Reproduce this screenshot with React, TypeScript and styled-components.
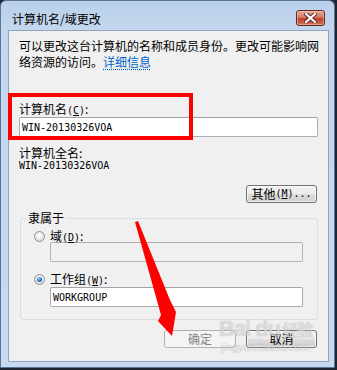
import React from 'react';
import styled, { createGlobalStyle } from 'styled-components';

const GlobalStyle = createGlobalStyle`
  html, body {
    margin: 0;
    padding: 0;
    background: #1d2530;
  }
  body {
    font-family: "Noto Sans CJK SC", "Noto Sans", sans-serif;
    font-size: 12px;
    color: #000;
  }
`;

const Window = styled.div`
  position: relative;
  width: 335px;
  height: 368px;
  box-sizing: border-box;
  border: 1px solid #5b7594;
  border-radius: 6px 6px 0 0;
  background: linear-gradient(#bad0ea, #c4d7ee 30px, #c6d9ef);
  padding: 0 5px 5px 7px;
  display: flex;
  flex-direction: column;
  overflow: hidden;
`;

const TitleBar = styled.div`
  height: 29px;
  display: flex;
  align-items: flex-start;
  justify-content: space-between;
`;

const Title = styled.div`
  margin: 10px 0 0 4px;
  line-height: 16px;
  color: #000;
`;

const CloseButton = styled.div`
  margin: 9px 4px 0 0;
  width: 29px;
  height: 16px;
  box-sizing: border-box;
  border: 1px solid #5e2a22;
  border-radius: 3px;
  background: linear-gradient(#e7a896, #d27764 45%, #bf3f2a 55%, #d0735d);
  box-shadow: inset 0 0 0 1px rgba(255, 220, 210, 0.45);
  display: flex;
  align-items: center;
  justify-content: center;
`;

const Client = styled.div`
  flex: 1;
  background: #f0f0f0;
  border: 1px solid #8ea4bf;
  padding: 7px 10px 0 10px;
  display: flex;
  flex-direction: column;
`;

const Intro = styled.div`
  line-height: 16px;
  margin-right: -4px;
`;

const Link = styled.span`
  color: #0066cc;
  text-decoration: underline dotted #0066cc;
  text-underline-offset: 2px;
`;

const Label = styled.div<{ $top: number }>`
  height: 16px;
  line-height: 16px;
  margin-top: ${(p) => p.$top}px;
`;

const Key = styled.span`
  font-family: "DejaVu Sans Mono", "Liberation Mono", monospace;
  font-size: 10px;
  line-height: 10px;
  u {
    text-underline-offset: 1px;
  }
`;

const TextBox = styled.div<{ $disabled?: boolean; $left?: number; $width?: number; $top?: number }>`
  height: 20px;
  box-sizing: border-box;
  margin-top: ${(p) => p.$top ?? 0}px;
  margin-left: ${(p) => p.$left ?? 0}px;
  width: ${(p) => (p.$width ? `${p.$width}px` : 'auto')};
  border: 1px solid ${(p) => (p.$disabled ? '#b5b5b5' : '#abadb3')};
  border-top-color: ${(p) => (p.$disabled ? '#adadad' : '#a0a2a8')};
  border-radius: 2px;
  background: ${(p) => (p.$disabled ? '#f0f0f0' : '#ffffff')};
  padding: 0 2px;
  display: flex;
  align-items: center;
  font-family: "DejaVu Sans Mono", "Liberation Mono", monospace;
  font-size: 10px;
`;

const Value = styled.div`
  margin-top: -1px;
  height: 12px;
  line-height: 12px;
  font-family: "DejaVu Sans Mono", "Liberation Mono", monospace;
  font-size: 10px;
`;

const Button = styled.div<{ $width: number; $disabled?: boolean; $default?: boolean }>`
  width: ${(p) => p.$width}px;
  height: 18px;
  box-sizing: border-box;
  border: 1px solid ${(p) => (p.$disabled ? '#adb2b5' : '#707070')};
  border-radius: 3px;
  background: ${(p) =>
    p.$disabled
      ? '#f4f4f4'
      : 'linear-gradient(#f2f2f2, #ebebeb 48%, #dddddd 52%, #cfcfcf)'};
  box-shadow: ${(p) => (p.$disabled ? 'none' : 'inset 0 0 0 1px rgba(255,255,255,0.7)')};
  color: ${(p) => (p.$disabled ? '#838383' : '#000')};
  display: flex;
  align-items: center;
  justify-content: center;
  line-height: 16px;
`;

const OtherRow = styled.div`
  margin-top: 13px;
  display: flex;
  justify-content: flex-end;
  padding-right: 1px;
`;

const Group = styled.fieldset`
  margin: 7px 0 0 1px;
  padding: 0 0 12px 0;
  border: 1px solid #d5dfe5;
  border-radius: 3px;
  min-width: 0;
`;

const Legend = styled.legend`
  margin-left: 5px;
  padding: 0 2px;
  height: 16px;
  line-height: 16px;
`;

const RadioRow = styled.div<{ $top: number }>`
  margin: ${(p) => p.$top}px 0 0 13px;
  height: 12px;
  line-height: 12px;
  display: flex;
  align-items: center;
  gap: 5px;
`;

const Radio = styled.span<{ $checked?: boolean }>`
  width: 11px;
  height: 11px;
  box-sizing: border-box;
  border-radius: 50%;
  border: 1px solid #8e8f8f;
  background: radial-gradient(circle at 50% 40%, #ffffff, #e4e4e4 60%, #cfcfcf);
  display: flex;
  align-items: center;
  justify-content: center;
  &::after {
    content: '';
    display: ${(p) => (p.$checked ? 'block' : 'none')};
    width: 5px;
    height: 5px;
    border-radius: 50%;
    background: radial-gradient(circle at 40% 35%, #8fd0ff, #1a6fc4 60%, #0b3f7a);
  }
`;

const ButtonRow = styled.div`
  margin-top: 10px;
  padding-right: 1px;
  display: flex;
  justify-content: flex-end;
  gap: 10px;
`;

const Highlight = styled.div`
  position: absolute;
  left: 7px;
  top: 92px;
  width: 185px;
  height: 47px;
  box-sizing: border-box;
  border: 4px solid #ff0000;
  pointer-events: none;
`;

const Overlay = styled.svg`
  position: absolute;
  left: -1px;
  top: -1px;
  pointer-events: none;
`;

const Watermark = styled.div`
  position: absolute;
  left: 218px;
  top: 316px;
  color: rgba(255, 255, 255, 0.55);
  text-shadow: 0 0 1px rgba(90, 90, 90, 0.45);
  pointer-events: none;
  font-family: "Liberation Sans", Arial, sans-serif;
`;

const MarkLine = styled.div`
  display: flex;
  align-items: flex-end;
  font-size: 22px;
  font-weight: bold;
  line-height: 24px;
  letter-spacing: -1px;
  span {
    font-family: "Noto Sans CJK SC", sans-serif;
    font-size: 16px;
    margin-left: 2px;
  }
`;

const MarkUrl = styled.div`
  font-size: 11px;
  line-height: 12px;
  margin-left: 2px;
`;

function App() {
  return (
    <>
      <GlobalStyle />
      <Window>
        <TitleBar>
          <Title>计算机名/域更改</Title>
          <CloseButton>
            <svg width="13" height="10" viewBox="0 0 13 10">
              <path d="M2 1 L11 9 M11 1 L2 9" stroke="#5a2a24" strokeWidth="4" strokeLinecap="square" />
              <path d="M2 1 L11 9 M11 1 L2 9" stroke="#ffffff" strokeWidth="2.2" strokeLinecap="square" />
            </svg>
          </CloseButton>
        </TitleBar>
        <Client>
          <Intro>
            可以更改这台计算机的名称和成员身份。更改可能影响网络资源的访问。<Link>详细信息</Link>
          </Intro>
          <Label $top={31}>
            计算机名<Key>(<u>C</u>)</Key>:
          </Label>
          <TextBox>WIN-20130326VOA</TextBox>
          <Label $top={8}>计算机全名:</Label>
          <Value>WIN-20130326VOA</Value>
          <OtherRow>
            <Button $width={71}>
              其他<Key>(<u>M</u>)...</Key>
            </Button>
          </OtherRow>
          <Group>
            <Legend>隶属于</Legend>
            <RadioRow $top={4}>
              <Radio />
              <span>
                域<Key>(<u>D</u>)</Key>:
              </span>
            </RadioRow>
            <TextBox $disabled $left={29} $width={253} />
            <RadioRow $top={11}>
              <Radio $checked />
              <span>
                工作组<Key>(<u>W</u>)</Key>:
              </span>
            </RadioRow>
            <TextBox $left={29} $width={253} $top={2}>
              WORKGROUP
            </TextBox>
          </Group>
          <ButtonRow>
            <Button $width={72} $disabled>
              确定
            </Button>
            <Button $width={71} $default>
              取消
            </Button>
          </ButtonRow>
        </Client>
        <Highlight />
        <Overlay width="337" height="370" viewBox="0 0 337 370">
          <polygon
            points="135,222 138,221 170,300 176,312 172,336 158,321 161,315"
            fill="#ff0000"
          />
        </Overlay>
        <Watermark>
          <MarkLine>
            Bai du<span>经验</span>
          </MarkLine>
          <MarkUrl>jingyan.baidu.com</MarkUrl>
        </Watermark>
      </Window>
    </>
  );
}

export default App;
